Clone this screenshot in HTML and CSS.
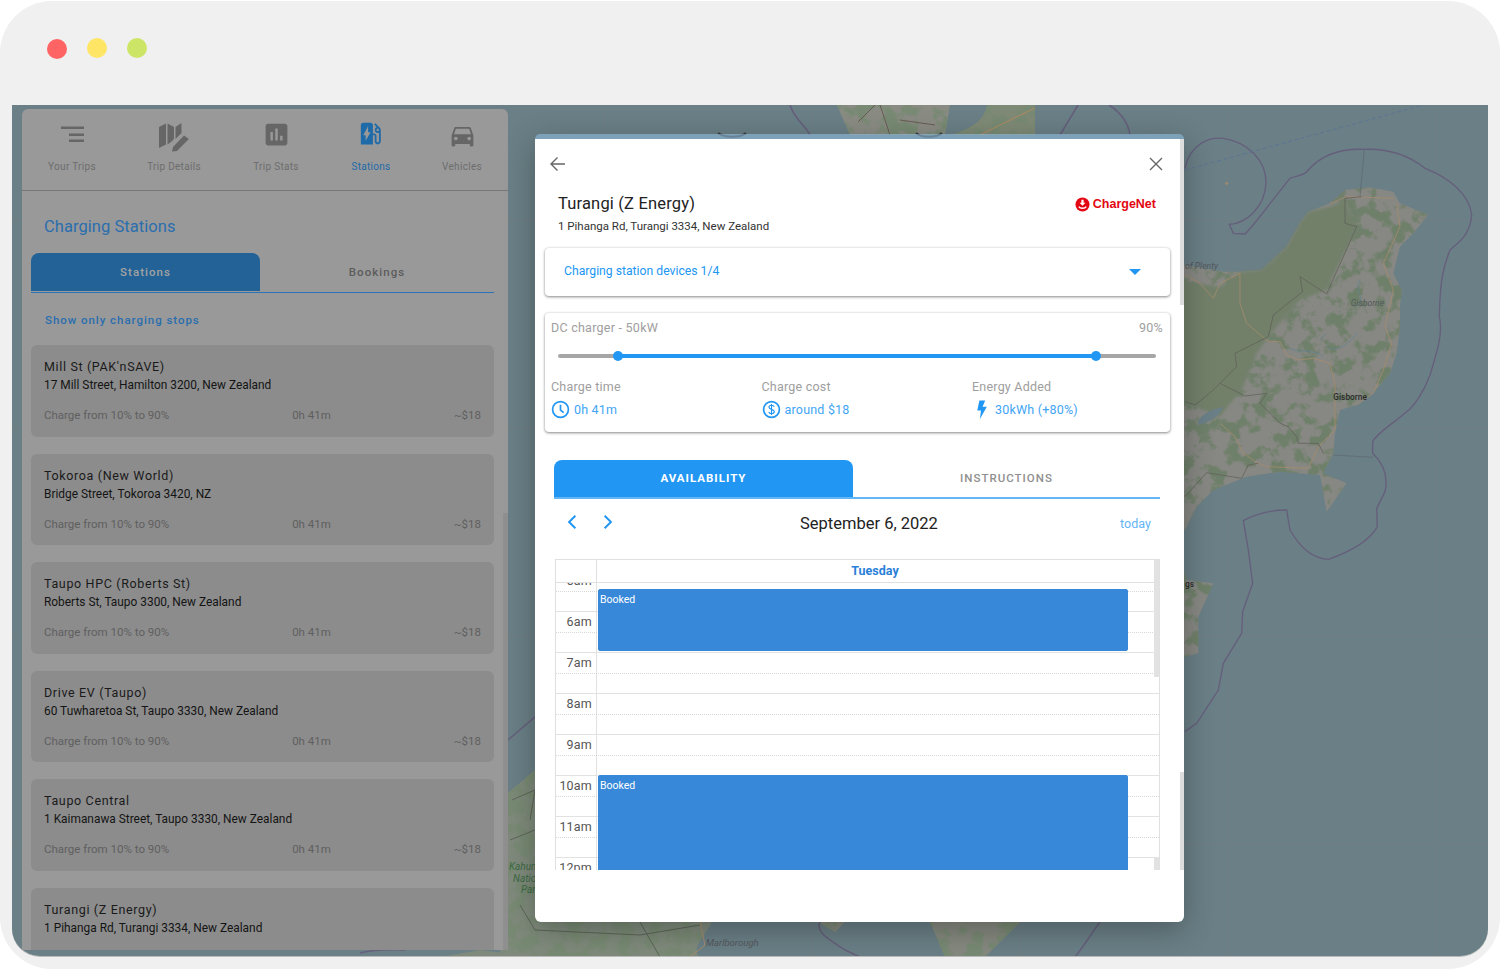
FILE: index.html
```html
<!DOCTYPE html>
<html lang="en">
<head>
<meta charset="utf-8">
<title>Charging Stations</title>
<link rel="stylesheet" href="styles.css">
</head>
<body>
<div class="frame">
  <div class="titlebar">
    <span class="light light-red"></span>
    <span class="light light-yellow"></span>
    <span class="light light-green"></span>
  </div>
  <div class="window">
    <svg class="map" viewBox="12 105 1476 852" xmlns="http://www.w3.org/2000/svg" aria-hidden="true">
      <defs>
        <filter id="mottle-large" x="0" y="0" width="1" height="1" color-interpolation-filters="sRGB">
          <feTurbulence type="fractalNoise" baseFrequency=".022" numOctaves="4" seed="7" result="noise"/>
          <feColorMatrix in="noise" type="matrix" values="0 0 0 0 .435  0 0 0 0 .5  0 0 0 0 .415  7 0 0 0 -3.400" result="patches"/>
          <feComposite in="patches" in2="SourceAlpha" operator="in" result="clipped"/>
          <feMerge result="merged"><feMergeNode in="SourceGraphic"/><feMergeNode in="clipped"/></feMerge>
          <feGaussianBlur in="merged" stdDeviation="1.500"/>
        </filter>
        <filter id="mottle-small" x="0" y="0" width="1" height="1" color-interpolation-filters="sRGB">
          <feTurbulence type="fractalNoise" baseFrequency=".06" numOctaves="3" seed="3" result="noise"/>
          <feColorMatrix in="noise" type="matrix" values="0 0 0 0 .47  0 0 0 0 .54  0 0 0 0 .45  7 0 0 0 -3.200" result="patches"/>
          <feComposite in="patches" in2="SourceAlpha" operator="in" result="clipped"/>
          <feMerge result="merged"><feMergeNode in="SourceGraphic"/><feMergeNode in="clipped"/></feMerge>
          <feGaussianBlur in="merged" stdDeviation=".5"/>
        </filter>
        <filter id="soft" x="-5%" y="-5%" width="110%" height="110%">
          <feGaussianBlur stdDeviation="4"/>
        </filter>
      </defs>
      <rect x="12" y="105" width="1476" height="852" fill="#6a7f86"/>
      <!-- tile seams -->
      <g stroke="#7a7f82" stroke-opacity=".45" stroke-width="1">
        <path d="M603 105V957M811 105V957M1019 105V957M1227 105V957M1435 105V957M12 220H1488M12 428H1488M12 635H1488M12 843H1488"/>
      </g>
      <!-- north island top strip -->
      <path d="M837 105L850 135H945L950 105Z" fill="#8a8c84" filter="url(#mottle-small)"/>
      <path d="M987 105C985 118 975 128 950 135H1035L1035 105Z" fill="#7f8a76" filter="url(#mottle-small)"/>
      <path d="M875 105L858 122M880 105L890 135M900 120L935 125" fill="none" stroke="#6a5a55" stroke-width="1"/>
      <path d="M1035 108L1000 125L980 135" fill="none" stroke="#b08a60" stroke-width="1"/>
      <path d="M790 105C795 120 805 125 810 135M1078 105L1060 135M1109 105C1120 112 1128 122 1130 135" fill="none" stroke="#665f7c" stroke-width="1.600"/>
      <path d="M718 133C725 138 740 138 746 133M916 133C922 138 936 138 942 133" fill="none" stroke="#3c3c3c" stroke-width="2"/>

      <!-- east cape -->
      <g transform="translate(1180 100) scale(.33333)">
        <path d="M-20 1300V490L130 515L180 515L245 510L320 440L360 370L385 335L450 310L495 270L570 262L640 275L660 310L745 345L700 400L660 440L640 520L665 570L660 620L660 680L650 760L630 820L580 880L530 915L480 930L465 1000L460 1060L430 1120L500 1150L440 1235L430 1180L420 1125L300 1115L200 1130L100 1170L50 1220L15 1290Z" fill="#878883" filter="url(#mottle-large)"/>
        <path d="M-20 540L120 560L180 515L245 510L320 440L360 370L385 335L450 320L495 300L530 380L440 570L360 600L290 680L230 760L190 860L120 950L20 910L-20 920Z" fill="#72806b" filter="url(#soft)"/>
        <!-- rivers -->
        <path d="M420 720L440 700M440 740C470 760 510 730 530 700M330 745C360 760 400 745 430 770M540 540C520 570 560 590 530 620" fill="none" stroke="#5f8296" stroke-width="2"/>
        <path d="M55 960C80 930 110 925 130 920C120 950 80 970 55 975Z" fill="#6a7f86"/>
        <!-- roads -->
        <path d="M15 525L60 550L100 595L120 550L180 520L180 610L200 670L265 725L300 725L320 765L355 780L400 775L450 790L465 850L465 990L415 1040L385 1105L260 1100L235 1090L190 1060L165 1010L120 970M650 310L660 380L610 490L640 570L615 680L635 730L610 810L580 880L530 915M450 310L500 290L640 295" fill="none" stroke="#a68c6b" stroke-width="2.400"/>
        <!-- boundaries -->
        <path d="M495 295L545 290M495 295L495 370L530 380L440 582L360 530L368 575L280 645L265 710L165 760L170 800L150 820L120 850L195 888L260 880L240 910L300 970L325 980L350 1010L355 1030L415 1030L430 1060M120 850L100 870L45 915L15 905M15 1190L80 1118L185 1135L205 1095L235 1090" fill="none" stroke="#5e5a55" stroke-width="2"/>
        <!-- maritime line -->
        <path d="M15 205C30 130 90 110 130 115C200 125 260 180 258 250C255 320 200 370 148 373L160 400L195 402C220 380 300 270 330 235C350 225 370 230 385 210C420 170 470 145 550 148C620 145 680 160 735 205C800 230 870 280 875 345C870 410 830 430 810 450C790 500 780 540 778 650C790 700 770 760 750 825C730 880 700 920 680 935C640 970 590 1000 578 1025L578 1060C610 1090 625 1130 615 1175L590 1225L592 1280C570 1320 525 1350 445 1378C400 1375 365 1350 330 1290L320 1230C280 1230 230 1240 190 1262L205 1350L218 1450L188 1535L185 1600L130 1690L115 1770L50 1870L15 1895" fill="none" stroke="#665f7c" stroke-width="4"/>
        <path d="M553 148L540 290M460 1065L580 1072" fill="none" stroke="#5e6670" stroke-width="2"/>
        <path d="M15 210L730 15" fill="none" stroke="#54709c" stroke-width="2" stroke-dasharray="12 8"/>
        <circle cx="140" cy="250" r="5" fill="#97886f"/>
        <path d="M-10 1350L20 1440L100 1450L55 1550L55 1660L15 1670L-10 1680Z" fill="#878883" filter="url(#mottle-large)"/>
        <text class="map-label map-italic-lg" x="512" y="617">Gisborne</text>
        <text class="map-label map-bold" x="460" y="900">Gisborne</text>
        <text class="map-label map-italic-lg" x="15" y="508">of Plenty</text>
        <text class="map-label map-bold" x="15" y="1462">gs</text>
      </g>

      <!-- south land -->
      <path d="M500 957L508 793L535 770L540 922L712 922C705 935 690 950 700 957Z" fill="#7f8a7c" filter="url(#mottle-small)"/>
      <path d="M440 957L480 950L540 957Z" fill="#7f8a7c"/>
      <path d="M818 922L835 932L845 922ZM930 922L945 957H985L1020 922Z" fill="#85897f" filter="url(#mottle-small)"/>
      <path d="M508 740L535 717M820 922C815 932 830 940 845 950L860 957M1075 957C1085 945 1090 935 1100 922M360 953C380 948 395 950 405 950" fill="none" stroke="#665f7c" stroke-width="1.500"/>
      <path d="M510 840L535 830M512 800L535 790L530 820M520 905L535 930L640 935L700 925M640 922L660 957" fill="none" stroke="#5e6658" stroke-width="1"/>
      <path d="M700 922L705 945L690 957" fill="none" stroke="#a68c6b" stroke-width="1"/>
      <text class="map-label map-park" x="509" y="870">Kahun</text>
      <text class="map-label map-park" x="513" y="882">Natio</text>
      <text class="map-label map-park" x="521" y="893">Par</text>
      <text class="map-label map-region" x="706" y="946">Marlborough</text>
    </svg>

    <aside class="panel">
      <nav class="nav">
        <a class="nav-item nav-trips">
          <svg class="nav-icon" viewBox="0 0 29 29"><path d="M3 5.500H26V8H3ZM11 12.500H26V15H11ZM11 18.500H26V21H11Z"/></svg>
          <span>Your Trips</span>
        </a>
        <a class="nav-item nav-details">
          <svg class="nav-icon" viewBox="0 0 32 30"><path d="M1 5L8 1.500V22.500L1 26ZM9.500 1.500L16 5V17L13 20L9.500 22.500ZM17.500 5L23.500 1V11L17.500 17Z"/><path d="M15 25L26 13.500L30.800 17L19 29L14 29.500Z"/></svg>
          <span>Trip Details</span>
        </a>
        <a class="nav-item nav-stats">
          <svg class="nav-icon" viewBox="0 0 24 24"><path d="M19 3H5c-1.100 0-2 .9-2 2v14c0 1.100.9 2 2 2h14c1.100 0 2-.9 2-2V5c0-1.100-.9-2-2-2zM9 17H7v-7h2v7zm4 0h-2V7h2v10zm4 0h-2v-4h2v4z"/></svg>
          <span>Trip Stats</span>
        </a>
        <a class="nav-item nav-active nav-stations">
          <svg class="nav-icon" viewBox="0 0 24 24"><path d="M19.770 7.230l.01-.01-3.720-3.720L15 4.560l2.110 2.110c-.94.36-1.610 1.260-1.610 2.330 0 1.380 1.120 2.500 2.500 2.500.36 0 .69-.08 1-.21v7.210c0 .55-.45 1-1 1s-1-.45-1-1V14c0-1.100-.9-2-2-2h-1V5c0-1.100-.9-2-2-2H6c-1.100 0-2 .9-2 2v16h10v-7.500h1.500v5c0 1.380 1.120 2.500 2.500 2.500s2.500-1.120 2.500-2.500V9c0-.69-.28-1.320-.73-1.770zM18 10c-.55 0-1-.45-1-1s.45-1 1-1 1 .45 1 1-.45 1-1 1zM8 18v-4.500H6L10 6v5h2l-4 7z"/></svg>
          <span>Stations</span>
        </a>
        <a class="nav-item nav-vehicles">
          <svg class="nav-icon" viewBox="0 0 24 24"><path d="M18.920 6.010C18.720 5.420 18.160 5 17.500 5h-11c-.66 0-1.210.42-1.420 1.010L3 12v8c0 .55.45 1 1 1h1c.55 0 1-.45 1-1v-1h12v1c0 .55.45 1 1 1h1c.55 0 1-.45 1-1v-8l-2.080-5.990zM6.500 16c-.83 0-1.500-.67-1.500-1.500S5.670 13 6.500 13s1.500.67 1.500 1.500S7.330 16 6.500 16zm11 0c-.83 0-1.500-.67-1.500-1.500s.67-1.500 1.500-1.500 1.500.67 1.500 1.500-.67 1.500-1.500 1.500zM5 11l1.500-4.500h11L19 11H5z"/></svg>
          <span>Vehicles</span>
        </a>
      </nav>
      <div class="panel-body">
        <h2 class="panel-title">Charging Stations</h2>
        <div class="panel-tabs">
          <div class="panel-tab panel-tab-active">Stations</div>
          <div class="panel-tab">Bookings</div>
        </div>
        <div class="show-only">Show only charging stops</div>
        <div class="cards">
          <article class="station">
            <h3 class="station-name">Mill St (PAK'nSAVE)</h3>
            <p class="station-address">17 Mill Street, Hamilton 3200, New Zealand</p>
            <div class="station-meta"><span>Charge from 10% to 90%</span><span>0h 41m</span><span>~$18</span></div>
          </article>
          <article class="station">
            <h3 class="station-name">Tokoroa (New World)</h3>
            <p class="station-address">Bridge Street, Tokoroa 3420, NZ</p>
            <div class="station-meta"><span>Charge from 10% to 90%</span><span>0h 41m</span><span>~$18</span></div>
          </article>
          <article class="station">
            <h3 class="station-name">Taupo HPC (Roberts St)</h3>
            <p class="station-address">Roberts St, Taupo 3300, New Zealand</p>
            <div class="station-meta"><span>Charge from 10% to 90%</span><span>0h 41m</span><span>~$18</span></div>
          </article>
          <article class="station">
            <h3 class="station-name">Drive EV (Taupo)</h3>
            <p class="station-address">60 Tuwharetoa St, Taupo 3330, New Zealand</p>
            <div class="station-meta"><span>Charge from 10% to 90%</span><span>0h 41m</span><span>~$18</span></div>
          </article>
          <article class="station">
            <h3 class="station-name">Taupo Central</h3>
            <p class="station-address">1 Kaimanawa Street, Taupo 3330, New Zealand</p>
            <div class="station-meta"><span>Charge from 10% to 90%</span><span>0h 41m</span><span>~$18</span></div>
          </article>
          <article class="station">
            <h3 class="station-name">Turangi (Z Energy)</h3>
            <p class="station-address">1 Pihanga Rd, Turangi 3334, New Zealand</p>
          </article>
        </div>
      </div>
      <span class="panel-scroll"></span>
    </aside>

    <section class="modal">
      <div class="modal-strip"></div>
      <div class="modal-body">
        <span class="modal-scroll modal-scroll-top"></span>
        <span class="modal-scroll modal-scroll-bottom"></span>
        <header class="modal-head">
          <svg class="modal-action" viewBox="0 0 18 18"><path d="M16 9H2.500M8.500 2.500L2 9L8.500 15.500"/></svg>
          <svg class="modal-action" viewBox="0 0 18 18"><path d="M3 3L15 15M15 3L3 15"/></svg>
        </header>
        <div class="detail-head">
          <div>
            <h1 class="detail-title">Turangi (Z Energy)</h1>
            <p class="detail-address">1 Pihanga Rd, Turangi 3334, New Zealand</p>
          </div>
          <div class="brand">
            <svg class="brand-mark" viewBox="0 0 16 16"><circle cx="8" cy="8" r="7.500" fill="#e30613"/><path d="M6.800 3H9.200V6H11.200L8 9.300L4.800 6H6.800Z" fill="#fff"/><path d="M4 10.200C5.500 12.600 10.500 12.600 12 10.200" fill="none" stroke="#fff" stroke-width="1.400"/></svg>
            <span class="brand-name">ChargeNet</span>
          </div>
        </div>
        <div class="devices card">
          <span>Charging station devices 1/4</span>
          <span class="caret"></span>
        </div>
        <div class="charge card">
          <div class="charge-head"><span>DC charger - 50kW</span><span>90%</span></div>
          <div class="slider"><div class="slider-fill"></div></div>
          <div class="charge-stats">
            <div class="stat">
              <div class="stat-label">Charge time</div>
              <div class="stat-value">
                <svg class="stat-icon" viewBox="0 0 18 18"><circle cx="9" cy="9" r="7.500"/><path d="M9 4.500V9.500L12 12"/></svg>
                <span>0h 41m</span>
              </div>
            </div>
            <div class="stat">
              <div class="stat-label">Charge cost</div>
              <div class="stat-value">
                <svg class="stat-icon" viewBox="0 0 18 18"><circle cx="9" cy="9" r="7.500"/><path class="stat-thin" d="M11.600 6.500C11 5.300 9.900 5 9 5C7.600 5 6.600 5.800 6.600 6.900C6.600 9.500 11.600 8.300 11.600 11C11.600 12.200 10.500 13 9 13C7.900 13 6.800 12.500 6.400 11.400M9 3.800V14.200"/></svg>
                <span>around $18</span>
              </div>
            </div>
            <div class="stat">
              <div class="stat-label">Energy Added</div>
              <div class="stat-value">
                <svg class="stat-icon stat-bolt" viewBox="0 0 18 18"><path d="M7 0.500L5 10H8.500L7.500 18L14 6.500H10L12.500 0.500Z"/></svg>
                <span>30kWh (+80%)</span>
              </div>
            </div>
          </div>
        </div>
        <div class="tabs">
          <div class="tab tab-active">AVAILABILITY</div>
          <div class="tab">INSTRUCTIONS</div>
        </div>
        <div class="cal-head">
          <div class="cal-nav">
            <svg class="cal-arrow" viewBox="0 0 12 14"><path d="M8.500 1.500L3 7L8.500 12.500"/></svg>
            <svg class="cal-arrow" viewBox="0 0 12 14"><path d="M3.500 1.500L9 7L3.500 12.500"/></svg>
          </div>
          <div class="cal-date">September 6, 2022</div>
          <div class="cal-today">today</div>
        </div>
        <div class="cal">
          <div class="cal-columns">
            <div class="cal-axis-head"></div>
            <div class="cal-day">Tuesday</div>
          </div>
          <div class="cal-scroller">
            <div class="cal-hours">
              <div class="hour"><div class="half"><span class="hour-label">5am</span></div><div class="half half-end"><span class="hour-label"></span></div></div>
              <div class="hour"><div class="half"><span class="hour-label">6am</span></div><div class="half half-end"><span class="hour-label"></span></div></div>
              <div class="hour"><div class="half"><span class="hour-label">7am</span></div><div class="half half-end"><span class="hour-label"></span></div></div>
              <div class="hour"><div class="half"><span class="hour-label">8am</span></div><div class="half half-end"><span class="hour-label"></span></div></div>
              <div class="hour"><div class="half"><span class="hour-label">9am</span></div><div class="half half-end"><span class="hour-label"></span></div></div>
              <div class="hour"><div class="half"><span class="hour-label">10am</span></div><div class="half half-end"><span class="hour-label"></span></div></div>
              <div class="hour"><div class="half"><span class="hour-label">11am</span></div><div class="half half-end"><span class="hour-label"></span></div></div>
              <div class="hour"><div class="half"><span class="hour-label">12pm</span></div><div class="half half-end"><span class="hour-label"></span></div></div>
              <div class="event event-first">Booked</div>
              <div class="event event-second">Booked</div>
            </div>
          </div>
          <span class="cal-scroll cal-scroll-top"></span>
          <span class="cal-scroll cal-scroll-bottom"></span>
        </div>
      </div>
    </section>
  </div>
</div>
</body>
</html>
```

FILE: styles.css
```css
* { box-sizing: border-box; }

html, body {
  margin: 0;
  padding: 0;
  background: #fff;
}

body {
  width: 1500px;
  height: 970px;
  overflow: hidden;
  font-family: Roboto, "Liberation Sans", sans-serif;
  color: #222;
}

h1, h2, h3, p { margin: 0; font-weight: 400; }

.frame {
  width: 1500px;
  height: 968px;
  margin-top: 1px;
  background: #f0f0f0;
  border-radius: 52px;
  display: flex;
  flex-direction: column;
  overflow: hidden;
}

.titlebar {
  height: 104px;
  flex: none;
  padding: 38px 0 0 47px;
  display: flex;
  gap: 20px;
  align-items: flex-start;
}

.light {
  width: 20px;
  height: 20px;
  border-radius: 50%;
}
.light-red { background: #ff6464; margin-top: 0; }
.light-yellow { background: #ffe566; margin-top: -1px; }
.light-green { background: #cde566; margin-top: -1px; }

.window {
  position: relative;
  width: 1476px;
  height: 852px;
  margin-left: 12px;
  border-radius: 0 0 28px 28px;
  border-bottom: 1px solid #b9b9b9;
  overflow: hidden;
  padding: 4px 0 0 10px;
}

.map {
  position: absolute;
  left: 0;
  top: 0;
  width: 1476px;
  height: 852px;
  display: block;
}

.map-label { font-family: Roboto, sans-serif; }
.map-italic-lg { font-size: 26px; font-style: italic; fill: #55585c; }
.map-bold { font-size: 25px; font-weight: 500; fill: #2b2b2b; }
.map-park { font-size: 10px; font-style: italic; fill: #3d6b45; }
.map-region { font-size: 9.500px; font-style: italic; fill: #55585c; }

/* Left panel */
.panel {
  position: relative;
  width: 486px;
  height: 841px;
  background: #999;
  border-radius: 6px 6px 0 0;
  overflow: hidden;
}

.panel-scroll {
  position: absolute;
  right: 0;
  top: 404px;
  bottom: 0;
  width: 5px;
  background: #8f8f8f;
}

.nav {
  height: 82px;
  border-bottom: 1px solid #777;
  display: flex;
  padding-left: 0;
}

.nav-item {
  display: flex;
  flex-direction: column;
  align-items: center;
  font-size: 10px;
  letter-spacing: .3px;
  line-height: 12px;
  color: #6d6d6d;
  height: 81px;
}
.nav-item span { margin-top: auto; margin-bottom: 17px; }
.nav-trips { width: 100px; }
.nav-details { width: 104px; }
.nav-stats { width: 100px; }
.nav-stations { width: 90px; }
.nav-vehicles { width: 92px; }

.nav-icon {
  fill: #666;
  width: 29px;
  height: 29px;
  margin-top: 11px;
  flex: none;
}
.nav-trips .nav-icon { margin-top: 12px; }
.nav-details .nav-icon { width: 32px; height: 30px; margin-top: 13px; }
.nav-stations .nav-icon { margin-top: 10px; margin-left: -2px; }
.nav-vehicles .nav-icon { margin-top: 12px; }
.nav-active { color: #1f6aa8; }
.nav-active .nav-icon { fill: #1f6aa8; }

.panel-body { padding: 0 14px 0 9px; }

.panel-title {
  font-size: 16.500px;
  letter-spacing: .05px;
  line-height: 22px;
  padding: 25px 0 0 13px;
  color: #2a6eae;
  height: 62px;
}

.panel-tabs {
  display: flex;
  height: 40px;
  border-bottom: 1px solid #2b74b8;
}
.panel-tab {
  flex: 1;
  display: flex;
  align-items: center;
  justify-content: center;
  font-size: 11.500px;
  font-weight: 500;
  letter-spacing: 1.050px;
  color: #5c5c5c;
  margin-bottom: 1px;
}
.panel-tab-active {
  flex: none;
  width: 229px;
  background: #226296;
  color: #a3a3a3;
  border-radius: 8px 8px 0 0;
}

.show-only {
  font-size: 11.500px;
  font-weight: 500;
  letter-spacing: .95px;
  line-height: 16px;
  color: #2a6eae;
  padding: 19px 0 0 14px;
  height: 53px;
}

.cards {
  display: flex;
  flex-direction: column;
  gap: 17px;
  margin-top: -1px;
}

.station {
  height: 91.600px;
  flex: none;
  background: #8c8c8c;
  border-radius: 6px;
  padding: 14px 13px 0;
}

.station-name {
  font-size: 12.500px;
  line-height: 16px;
  letter-spacing: .65px;
  font-weight: 400;
  color: #1a1a1a;
}

.station-address {
  font-size: 11.900px;
  line-height: 16px;
  margin-top: 2px;
  color: #141414;
}

.station-meta {
  display: flex;
  justify-content: space-between;
  font-size: 11.500px;
  line-height: 14px;
  margin-top: 15px;
  color: #5f5f5f;
}

/* Modal */
.modal {
  position: absolute;
  left: 523px;
  top: 29px;
  width: 649px;
  height: 788px;
  border-radius: 6px;
  box-shadow: 0 8px 30px rgba(0, 0, 0, .28);
  display: flex;
  flex-direction: column;
}

.modal-strip {
  height: 5px;
  flex: none;
  border-radius: 6px 6px 0 0;
  background: rgba(140, 190, 225, .55);
}

.modal-body {
  position: relative;
  flex: 1;
  background: #fff;
  border-radius: 0 0 6px 6px;
  overflow: hidden;
}

.modal-scroll {
  position: absolute;
  right: 0;
  width: 4px;
  background: #ddd;
}
.modal-scroll-top { top: 0; height: 166px; }
.modal-scroll-bottom { top: 633px; height: 98px; }

.modal-head {
  height: 50px;
  display: flex;
  justify-content: space-between;
  align-items: center;
  padding: 0 19px 0 14px;
}

.modal-action {
  width: 18px;
  height: 18px;
  fill: none;
  stroke: #666;
  stroke-width: 1.400;
}

.detail-head {
  height: 59px;
  display: flex;
  justify-content: space-between;
  padding: 0 28px 0 23px;
}

.detail-title {
  font-size: 16.500px;
  letter-spacing: .17px;
  line-height: 29px;
  color: #222;
}

.detail-address {
  font-size: 11.500px;
  line-height: 17px;
  color: #333;
}

.brand {
  display: flex;
  align-items: center;
  gap: 3px;
  height: 30px;
}
.brand-mark { width: 15px; height: 15px; }
.brand-name {
  font-family: "Liberation Sans", sans-serif;
  font-size: 12.500px;
  font-weight: 700;
  color: #e30613;
}

.card {
  width: 625px;
  margin-left: 10px;
  background: #fff;
  border-radius: 4px;
  box-shadow: 0 1px 3px rgba(0, 0, 0, .45), 0 0 2px rgba(0, 0, 0, .1);
}

.devices {
  height: 48px;
  display: flex;
  align-items: center;
  justify-content: space-between;
  padding: 0 29px 2px 19px;
  font-size: 12.200px;
  color: #2196f3;
}

.caret {
  width: 0;
  height: 0;
  margin-top: 2px;
  border-left: 6px solid transparent;
  border-right: 6px solid transparent;
  border-top: 6px solid #2196f3;
}

.charge {
  height: 119px;
  margin-top: 17px;
  padding: 7px 7px 0 6px;
}

.charge-head {
  display: flex;
  justify-content: space-between;
  font-size: 12.500px;
  letter-spacing: .25px;
  line-height: 16px;
  color: #9e9e9e;
}

.slider {
  height: 4px;
  margin: 18px 7px 0;
  background: #a6a6a6;
  border-radius: 2px;
}

.slider-fill {
  position: relative;
  height: 4px;
  width: 80%;
  margin-left: 10%;
  background: #2196f3;
}
.slider-fill::before,
.slider-fill::after {
  content: "";
  position: absolute;
  top: -3px;
  width: 10px;
  height: 10px;
  border-radius: 50%;
  background: #2196f3;
}
.slider-fill::before { left: -5px; }
.slider-fill::after { right: -5px; }

.charge-stats {
  display: grid;
  grid-template-columns: repeat(3, 210.500px);
  margin-top: 21px;
}

.stat-label {
  font-size: 12.500px;
  letter-spacing: .22px;
  line-height: 16px;
  color: #9e9e9e;
}

.stat-value {
  display: flex;
  align-items: center;
  gap: 4px;
  font-size: 12.500px;
  letter-spacing: .2px;
  line-height: 18px;
  margin-top: 5px;
  color: #42a5f5;
}

.stat-icon {
  width: 19px;
  height: 19px;
  flex: none;
  fill: none;
  stroke: #2196f3;
  stroke-width: 1.600;
}
.stat-thin { stroke-width: 1.100; }
.stat-bolt { fill: #2196f3; stroke: none; }

.tabs {
  display: flex;
  height: 39px;
  margin: 28px 24px 0 19px;
  border-bottom: 2px solid #64b5f6;
}
.tab {
  flex: 1;
  display: flex;
  align-items: center;
  justify-content: center;
  font-size: 11.500px;
  font-weight: 500;
  letter-spacing: 1px;
  color: #8f8f8f;
  padding-bottom: 2px;
}
.tab-active {
  flex: none;
  width: 299px;
  background: #2196f3;
  color: #fff;
  font-weight: 700;
  border-radius: 8px 8px 0 0;
}

.cal-head {
  height: 48px;
  margin: 0 33px 12px 30px;
  display: flex;
  align-items: center;
}

.cal-nav {
  width: 173px;
  display: flex;
  gap: 20px;
  margin-top: -2px;
}
.cal-arrow {
  width: 15px;
  height: 16px;
  fill: none;
  stroke: #2196f3;
  stroke-width: 1.700;
}

.cal-date {
  flex: 1;
  font-size: 16.500px;
  color: #222;
  padding-left: 62px;
}

.cal-today {
  font-size: 12.500px;
  letter-spacing: .05px;
  color: #64b5f6;
}

.cal {
  position: relative;
  height: 311px;
  width: 605px;
  margin-left: 20px;
  border-right: 1px solid #e0e0e0;
  border-left: 1px solid #e0e0e0;
  border-top: 1px solid #e0e0e0;
  display: flex;
  flex-direction: column;
  overflow: hidden;
}

.cal-columns {
  display: flex;
  height: 23px;
  flex: none;
  border-bottom: 1px solid #e0e0e0;
}
.cal-axis-head {
  width: 41px;
  flex: none;
  border-right: 1px solid #e0e0e0;
}
.cal-day {
  flex: 1;
  display: flex;
  align-items: center;
  justify-content: center;
  font-size: 12.500px;
  font-weight: 700;
  color: #2a80d8;
  padding: 0 6px 2px 0;
}

.cal-scroller {
  flex: 1;
  overflow: hidden;
}

.cal-hours {
  position: relative;
  margin-top: -13px;
}

.hour { height: 41px; }

.half {
  height: 20.500px;
  display: flex;
  border-top: 1px solid #e2e2e2;
}
.half-end { border-top: 1px dotted #d8d8d8; }

.hour-label {
  width: 41px;
  flex: none;
  height: 100%;
  text-align: right;
  padding: 2px 4px 0 0;
  font-size: 12.500px;
  line-height: 15px;
  color: #555;
  border-right: 1px solid #e2e2e2;
  letter-spacing: .2px;
}

.event {
  position: absolute;
  left: 42px;
  width: 530px;
  background: #3788d8;
  border: 1px solid #3788d8;
  border-radius: 2px;
  color: #fff;
  font-size: 10.500px;
  line-height: 14px;
  padding: 3px 1px;
}
.event-first { top: 19px; height: 62px; }
.event-second { top: 205px; height: 110px; }

.cal-scroll {
  position: absolute;
  right: 0;
  width: 5px;
  background: #e2e2e2;
}
.cal-scroll-top { top: 0; height: 117px; }
.cal-scroll-bottom { top: 297px; height: 14px; }
```
